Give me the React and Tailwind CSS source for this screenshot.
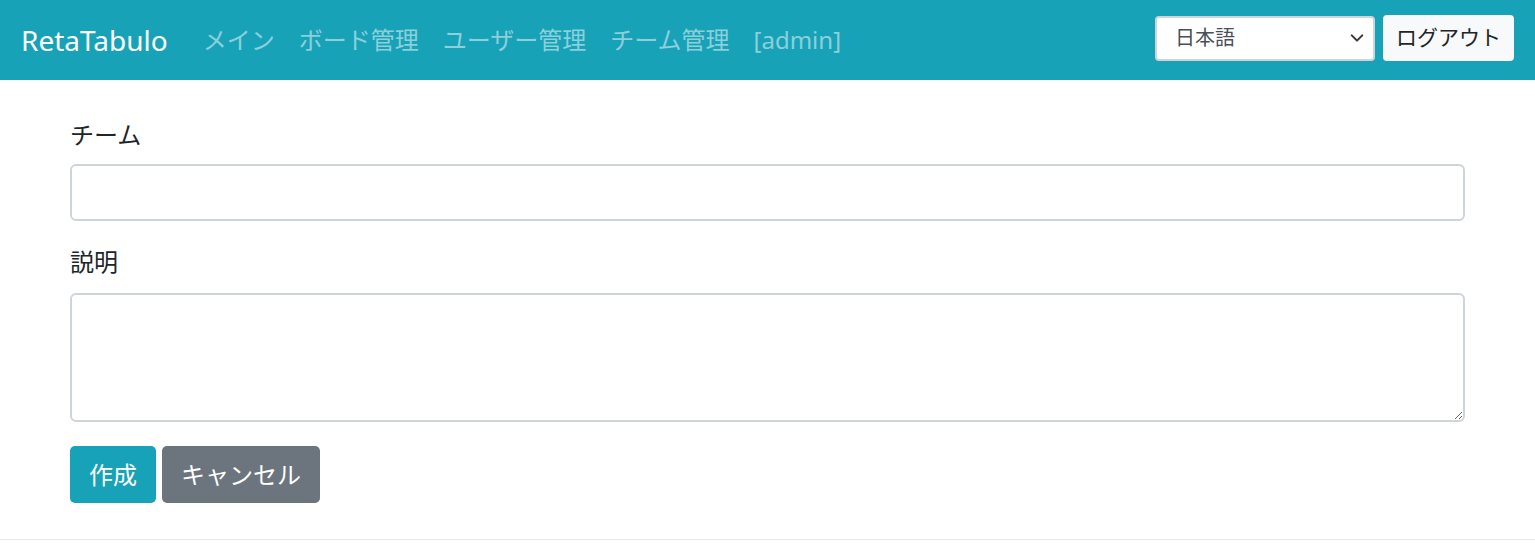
import React, { useState } from "react";

const font = { fontFamily: '"Noto Sans", "Noto Sans CJK JP", sans-serif' };

const links = ["メイン", "ボード管理", "ユーザー管理", "チーム管理", "[admin]"];

function NavBar() {
  const [lang, setLang] = useState("ja");
  return (
    <nav className="flex h-[80px] items-center justify-between bg-[#17a2b8] pb-[4px] pl-[21px] pr-[21px]">
      <div className="flex items-center pt-[4px]">
        <a className="mr-[23px] text-[28px] leading-none text-white">RetaTabulo</a>
        <ul className="flex items-center">
          {links.map((l) => (
            <li key={l} className="px-[12px] text-[24px] leading-none text-white/50">
              {l}
            </li>
          ))}
        </ul>
      </div>
      <div className="flex items-center gap-[8px]">
        <div className="relative">
          <select
            value={lang}
            onChange={(e) => setLang(e.target.value)}
            className="h-[45px] w-[220px] appearance-none rounded-[4px] border-2 border-[#ced4da] bg-white pl-[18px] text-[20px] text-[#495057] outline-none"
          >
            <option value="ja">日本語</option>
            <option value="en">English</option>
          </select>
          <svg className="pointer-events-none absolute right-[11px] top-[16px] h-[12px] w-[14px]" viewBox="0 0 16 12" fill="none" stroke="#343a40" strokeWidth="2.4" strokeLinecap="round" strokeLinejoin="round">
            <path d="M2 3l6 6 6-6" />
          </svg>
        </div>
        <button className="h-[46px] rounded-[4px] bg-[#f8f9fa] px-[13px] text-[21px] text-[#212529]">ログアウト</button>
      </div>
    </nav>
  );
}

export default function App() {
  return (
    <div className="min-h-[551px] bg-white text-[#212529]" style={font}>
      <NavBar />
      <form className="px-[70px] pt-[37px]" onSubmit={(e) => e.preventDefault()}>
        <div className="mb-[23px]">
          <label className="mb-[12px] block text-[24px] leading-[35px]">チーム</label>
          <input className="block h-[57px] w-full rounded-[6px] border-2 border-[#ced4da] bg-white px-[16px] text-[23px] outline-none" />
        </div>
        <div className="mb-[24px]">
          <label className="mb-[14px] block text-[24px] leading-[35px]">説明</label>
          <textarea className="block h-[129px] w-full rounded-[6px] border-2 border-[#ced4da] bg-white px-[16px] py-[8px] text-[23px] outline-none" />
        </div>
        <div className="flex gap-[6px]">
          <button className="h-[57px] rounded-[5px] bg-[#17a2b8] px-[19px] text-[24px] text-white">作成</button>
          <button className="h-[57px] rounded-[5px] bg-[#6c757d] px-[19px] text-[24px] text-white">キャンセル</button>
        </div>
      </form>
      <div className="mt-[36px] border-t border-[#e9e9ec]" />
    </div>
  );
}
